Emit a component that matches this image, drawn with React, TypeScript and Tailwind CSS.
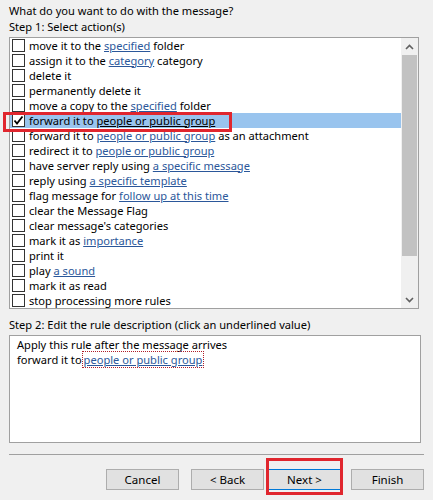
import React from "react";

type Part = { t: string; link?: boolean };
const rows: Part[][] = [
  [{ t: "move it to the " }, { t: "specified", link: true }, { t: " folder" }],
  [{ t: "assign it to the " }, { t: "category", link: true }, { t: " category" }],
  [{ t: "delete it" }],
  [{ t: "permanently delete it" }],
  [{ t: "move a copy to the " }, { t: "specified", link: true }, { t: " folder" }],
  [{ t: "forward it to " }, { t: "people or public group", link: true }],
  [{ t: "forward it to " }, { t: "people or public group", link: true }, { t: " as an attachment" }],
  [{ t: "redirect it to " }, { t: "people or public group", link: true }],
  [{ t: "have server reply using " }, { t: "a specific message", link: true }],
  [{ t: "reply using " }, { t: "a specific template", link: true }],
  [{ t: "flag message for " }, { t: "follow up at this time", link: true }],
  [{ t: "clear the Message Flag" }],
  [{ t: "clear message's categories" }],
  [{ t: "mark it as " }, { t: "importance", link: true }],
  [{ t: "print it" }],
  [{ t: "play " }, { t: "a sound", link: true }],
  [{ t: "mark it as read" }],
  [{ t: "stop processing more rules" }],
];

function Row({ parts, selected }: { parts: Part[]; selected: boolean }) {
  return (
    <div className={`flex items-center h-[15px] pl-[2px] ${selected ? "bg-[#99c4ee]" : ""}`}>
      <div className="w-[13px] h-[13px] border border-[#333333] bg-white flex items-center justify-center shrink-0">
        {selected && (
          <svg width="11" height="11" viewBox="0 0 11 11">
            <path d="M1.5 5.5 L4 8.5 L9.5 1.5" stroke="#000" strokeWidth="1.8" fill="none" />
          </svg>
        )}
      </div>
      <div className="ml-[4px] whitespace-nowrap leading-[14px]">
        {parts.map((p, i) =>
          p.link ? (
            <span key={i} className={`underline ${selected ? "text-black" : "text-[#2b579a]"}`}>
              {p.t}
            </span>
          ) : (
            <span key={i}>{p.t}</span>
          )
        )}
      </div>
    </div>
  );
}

function Btn({ label, w, primary }: { label: string; w: string; primary?: boolean }) {
  return (
    <div
      className={`${w} h-[21px] flex items-center justify-center bg-[#e1e1e1] border ${
        primary ? "border-[#0078d7]" : "border-[#adadad]"
      } text-black text-[11.5px]`}
    >
      {label}
    </div>
  );
}

export default function App() {
  return (
    <div
      className="relative w-[433px] h-[500px] bg-[#f0f0f0] overflow-hidden text-[11.1px] text-black"
      style={{ fontFamily: '"Noto Sans", "Open Sans", sans-serif' }}
    >
      <div className="pl-[9px] pt-[3px]">
        <div className="leading-[16px]">What do you want to do with the message?</div>
        <div className="leading-[16px]">Step 1: Select action(s)</div>
        <div className="mt-[2px] w-[410px] h-[272px] border border-[#a0a0a0] bg-white flex">
          <div className="flex-1 flex flex-col">
            {rows.map((r, i) => (
              <Row key={i} parts={r} selected={i === 5} />
            ))}
          </div>
          <div className="w-[17px] flex flex-col bg-[#f0f0f0]">
            <div className="h-[17px] flex items-center justify-center">
              <svg width="9" height="6" viewBox="0 0 9 6">
                <path d="M1 5 L4.5 1.5 L8 5" stroke="#606060" strokeWidth="1.6" fill="none" />
              </svg>
            </div>
            <div className="h-[201px] mx-[1px] bg-[#c2c2c2]" />
            <div className="flex-1" />
            <div className="h-[17px] flex items-center justify-center">
              <svg width="9" height="6" viewBox="0 0 9 6">
                <path d="M1 1 L4.5 4.5 L8 1" stroke="#606060" strokeWidth="1.6" fill="none" />
              </svg>
            </div>
          </div>
        </div>
        <div className="mt-[8px] leading-[16px]">Step 2: Edit the rule description (click an underlined value)</div>
        <div className="mt-[2px] w-[412px] h-[108px] border border-[#a0a0a0] bg-white pl-[7px] pt-[1px]">
          <div className="leading-[15px]">Apply this rule after the message arrives</div>
          <div className="leading-[15px] whitespace-nowrap">
            forward it to
            <span className="ml-[1px] outline outline-1 outline-dotted outline-[#b01e2a] text-[#2b579a] underline px-[1px]">
              people or public group
            </span>
          </div>
        </div>
        <div className="mt-[11px] w-[415px] h-[1px] bg-[#a0a0a0]" />
        <div className="mt-[14px] flex pl-[97px]">
          <Btn label="Cancel" w="w-[73px]" />
          <div className="w-[12px]" />
          <Btn label="< Back" w="w-[73px]" />
          <div className="w-[4px]" />
          <Btn label="Next >" w="w-[73px]" primary />
          <div className="w-[10px]" />
          <Btn label="Finish" w="w-[73px]" />
        </div>
      </div>
      <div className="absolute left-[3px] top-[112px] w-[229px] h-[20px] border-[3px] border-[#e0262e]" />
      <div className="absolute left-[266px] top-[458px] w-[77px] h-[37px] border-[3px] border-[#e0262e]" />
    </div>
  );
}
